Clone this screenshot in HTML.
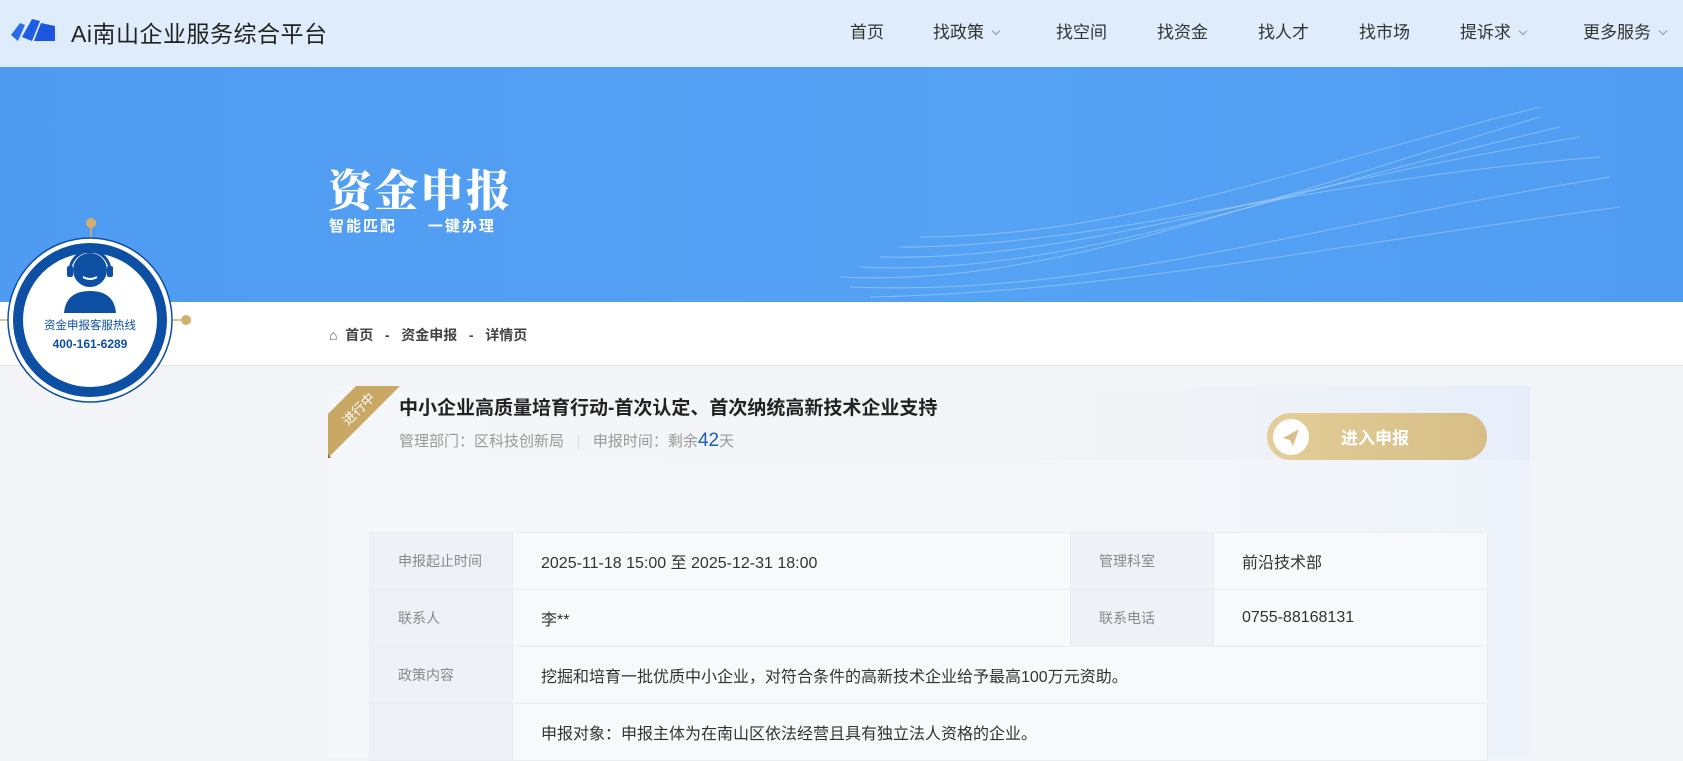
<!DOCTYPE html>
<html><head><meta charset="utf-8"><style>
*{margin:0;padding:0;box-sizing:border-box}
body{width:1683px;height:757px;overflow:hidden;background:#f3f4f7;font-family:"Liberation Sans","Noto Sans CJK SC",sans-serif;position:relative;color:#333}
.nav{position:absolute;left:0;top:0;width:1683px;height:67px;background:#deecfb}
.nav .t{position:absolute;left:71px;top:15px;font-size:23px;color:#222;letter-spacing:0.5px}
.nav .m{position:absolute;top:18px;font-size:17px;color:#333;white-space:nowrap}
.chev{display:inline-block;width:6px;height:6px;border-right:1.3px solid #999;border-bottom:1.3px solid #999;transform:rotate(45deg);margin-left:9px;position:relative;top:-4px}
.banner{position:absolute;left:0;top:67px;width:1683px;height:235px;background:linear-gradient(90deg,#4f9bf2,#55a2f4 60%,#4f9cf2)}
.banner h1{position:absolute;left:328px;top:88px;font-family:"Noto Serif CJK SC",serif;font-size:44px;color:#fff;font-weight:900;letter-spacing:2px}
.banner .s{position:absolute;left:329px;top:148px;font-size:15px;color:#fff;font-weight:bold;letter-spacing:2px}
.bc{position:absolute;left:0;top:302px;width:1683px;height:64px;background:#fff;border-bottom:1px solid #e2e4e8}
.bc .x{position:absolute;left:329px;top:23px;font-size:14px;font-weight:bold;color:#444;white-space:nowrap}
.card{position:absolute;left:328px;top:386px;width:1202px;height:371px;background:linear-gradient(90deg,#f6f7fa,#f4f6fa 70%,#eef3fb)}
.head{position:absolute;left:328px;top:386px;width:1202px;height:74px;background:linear-gradient(90deg,#f5f6f9,#f1f3f7 70%,#e7eefa)}
.ttl{position:absolute;left:399px;top:393px;font-size:19px;font-weight:bold;color:#222}
.sub{position:absolute;left:399px;top:430px;font-size:15px;color:#999;white-space:nowrap}
.sub b{font-weight:normal;color:#1a5fb4;font-size:19px}
.btn{position:absolute;left:1267px;top:413px;width:220px;height:47px;border-radius:24px;background:linear-gradient(90deg,#e4cd98,#d7be87)}
.btn .c{position:absolute;left:6px;top:6px;width:36px;height:36px;border-radius:50%;background:#fff}
.btn span{position:absolute;left:74px;top:11px;color:#fff;font-size:17px;font-weight:bold}
table{position:absolute;left:369px;top:532px;border-collapse:collapse;width:1118px;table-layout:fixed}
td{height:57px;border:1px solid #e9ecf1;font-size:16px;color:#333;padding-left:28px}
td.l{background:#eef2f8;color:#888;font-size:14px}
td.v{background:#f8f9fb}
</style></head><body>
<div class="nav">
<svg style="position:absolute;left:10px;top:15px" width="46" height="28" viewBox="0 0 46 28"><polygon points="1,20 10,8 15,10 8,26" fill="#2d6bea"/><polygon points="12,22 22,4 30,6 22,26" fill="#1d5de6"/><polygon points="24,26 31,8 45,11 45,26" fill="#1a56e0"/></svg>
<div class="t">Ai南山企业服务综合平台</div>
<div class="m" style="left:850px">首页</div>
<div class="m" style="left:933px">找政策<i class="chev"></i></div>
<div class="m" style="left:1056px">找空间</div>
<div class="m" style="left:1157px">找资金</div>
<div class="m" style="left:1258px">找人才</div>
<div class="m" style="left:1359px">找市场</div>
<div class="m" style="left:1460px">提诉求<i class="chev"></i></div>
<div class="m" style="left:1583px">更多服务<i class="chev"></i></div>
</div>
<div class="banner">
<svg style="position:absolute;left:840px;top:20px" width="780" height="220" viewBox="0 0 780 220" fill="none" stroke="#e8f3ff" stroke-opacity="0.35">
<path d="M0 190 C200 200 400 120 700 30"/><path d="M20 180 C220 190 420 110 720 40"/><path d="M40 170 C240 175 430 100 740 50"/><path d="M60 160 C260 160 450 95 760 70"/><path d="M10 200 C250 210 460 140 770 90"/><path d="M80 150 C280 150 460 80 700 20"/><path d="M30 210 C270 205 480 160 780 120"/></svg>
<h1>资金申报</h1>
<div class="s">智能匹配 &nbsp;&nbsp;&nbsp;&nbsp;一键办理</div>
</div>
<div class="bc"><div class="x"><span style="color:#555">&#8962;</span>&nbsp; 首页 &nbsp;&nbsp;-&nbsp;&nbsp; 资金申报 &nbsp;&nbsp;-&nbsp;&nbsp; 详情页</div></div>
<div class="card"></div>
<div class="head"></div>
<svg style="position:absolute;left:328px;top:386px" width="72" height="72" viewBox="0 0 72 72"><polygon points="0,28 28,0 72,0 0,72" fill="#c9a765"/><polygon points="0,68 0,72 3,72" fill="#8a6a30"/><text x="20" y="40" transform="rotate(-45 20 40)" fill="#fff" font-size="13" font-family="Noto Sans CJK SC">进行中</text></svg>
<div class="ttl">中小企业高质量培育行动-首次认定、首次纳统高新技术企业支持</div>
<div class="sub">管理部门：区科技创新局 &nbsp;&nbsp;<span style="color:#ddd">|</span>&nbsp;&nbsp; 申报时间：剩余<b>42</b>天</div>
<div class="btn"><div class="c"><svg width="36" height="36" viewBox="0 0 36 36"><path d="M10 19 L26 10 L20 27 L17 21 Z" fill="#d9c08a"/></svg></div><span>进入申报</span></div>
<table>
<colgroup><col style="width:143px"><col style="width:558px"><col style="width:143px"><col style="width:274px"></colgroup>
<tr><td class="l">申报起止时间</td><td class="v">2025-11-18 15:00 至 2025-12-31 18:00</td><td class="l">管理科室</td><td class="v">前沿技术部</td></tr>
<tr><td class="l">联系人</td><td class="v">李**</td><td class="l">联系电话</td><td class="v">0755-88168131</td></tr>
<tr><td class="l">政策内容</td><td class="v" colspan="3">挖掘和培育一批优质中小企业，对符合条件的高新技术企业给予最高100万元资助。</td></tr>
<tr><td class="l"></td><td class="v" colspan="3">申报对象：申报主体为在南山区依法经营且具有独立法人资格的企业。</td></tr>
</table>
<svg style="position:absolute;left:0;top:215px" width="200" height="200" viewBox="0 0 200 200">
<line x1="0" y1="105" x2="186" y2="105" stroke="#d3b06c" stroke-width="1.5"/>
<line x1="91" y1="8" x2="91" y2="30" stroke="#d3b06c" stroke-width="1.5"/>
<circle cx="91" cy="8" r="5" fill="#d3b06c"/><circle cx="186" cy="105" r="5" fill="#d3b06c"/>
<circle cx="90" cy="105" r="82" fill="#fff" stroke="#0d4fa3" stroke-width="1.5"/>
<circle cx="90" cy="105" r="72" fill="#fff" stroke="#0d4fa3" stroke-width="10"/>
<circle cx="90" cy="55" r="17" fill="#0d4fa3"/>
<path d="M70 56 a20 20 0 0 1 40 0" fill="none" stroke="#0d4fa3" stroke-width="3"/>
<rect x="67" y="51" width="6" height="11" rx="2" fill="#0d4fa3"/><rect x="107" y="51" width="6" height="11" rx="2" fill="#0d4fa3"/>
<path d="M83 62 q7 4 14 0" stroke="#fff" stroke-width="2" fill="none"/>
<path d="M64 98 q2 -22 26 -22 q24 0 26 22 z" fill="#0d4fa3"/>
<text x="90" y="114" text-anchor="middle" font-size="11.5" fill="#0d4fa3" font-family="Noto Sans CJK SC">资金申报客服热线</text>
<text x="90" y="133" text-anchor="middle" font-size="12" font-weight="bold" fill="#0d4fa3" font-family="Liberation Sans">400-161-6289</text>
</svg>
</body></html>
